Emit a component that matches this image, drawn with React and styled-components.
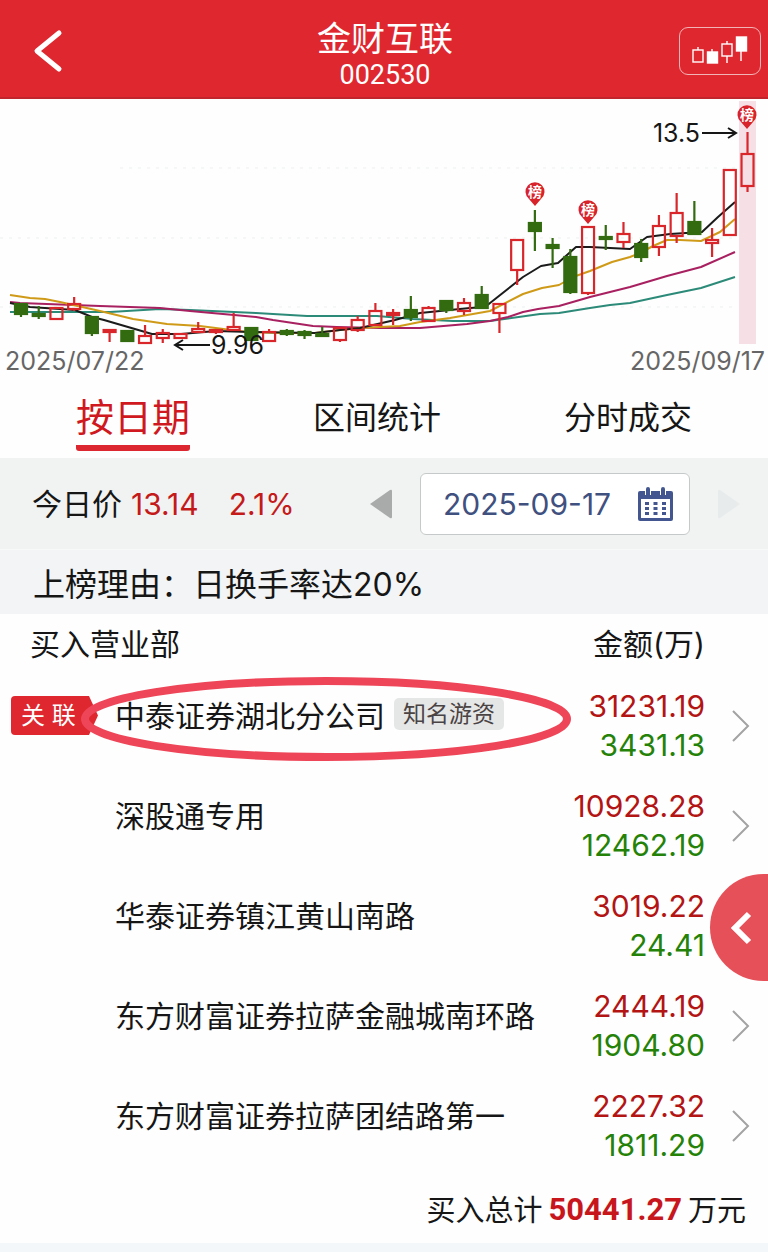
import React from "react";
import styled, { createGlobalStyle, css } from "styled-components";

const GlobalStyle = createGlobalStyle`
  * { box-sizing: border-box; }
  body {
    margin: 0;
    background: #f3f7f9;
    color: #161616;
    font-family: Inter, "Noto Sans CJK SC", sans-serif;
    font-size: 30px;
  }
  button, input { font: inherit; color: inherit; }
  button {
    margin: 0;
    padding: 0;
    border: 0;
    background: none;
    cursor: pointer;
  }
  svg { display: block; }
`;

const Page = styled.main`
  position: relative;
  overflow: hidden;
  background: #fefefe;
`;

const Header = styled.header`
  display: grid;
  grid-template-columns: 89px 1fr 89px;
  align-items: center;
  height: 99px;
  padding-top: 4px;
  background: #df272f;
  border-bottom: 2px solid #c0242c;
  color: #fff;
`;

const BackButton = styled.button`
  width: 64px;
  height: 64px;
  padding-left: 32px;
`;

const Heading = styled.div`
  padding: 8px 0 0 2px;
  text-align: center;
`;

const StockName = styled.h1`
  margin: 0;
  font-size: 34px;
  font-weight: 400;
  line-height: 40px;
`;

const StockCode = styled.div`
  font-family: Roboto, sans-serif;
  font-size: 27px;
  line-height: 32px;
`;

const KlineButton = styled.button`
  display: flex;
  justify-content: center;
  align-items: center;
  width: 82px;
  height: 48px;
  border: 1px solid #f3b4b7;
  border-radius: 9px;
`;

const Chart = styled.svg`
  width: 100%;
  height: auto;
`;

const Tabs = styled.nav`
  display: flex;
  justify-content: space-between;
  align-items: flex-start;
  height: 80px;
  padding: 0 76px;
`;

const Tab = styled.button`
  height: 73px;
  font-size: 32px;
  line-height: 80px;
  ${(p) =>
    p.$active &&
    css`
      border-bottom: 6px solid #dc2731;
      border-radius: 3px;
      color: #cf1820;
      font-size: 38px;
      line-height: 78px;
    `}
`;

const Bar = styled.section`
  display: flex;
  align-items: center;
  background: #f1f3f3;
`;

const PriceBar = styled(Bar)`
  height: 91px;
  padding: 0 28px 0 32px;
`;

const Quote = styled.div`
  display: flex;
  flex: 1;
  align-items: center;
  padding-bottom: 4px;
  white-space: nowrap;
`;

const Figure = styled.span`
  padding-top: 4px;
  margin-left: ${(p) => p.$gap}px;
  color: #c41a1a;
`;

const StepButton = styled.button`
  width: 22px;
  color: ${(p) => (p.$faint ? "#e8ebeb" : "#a9abab")};
`;

const DateField = styled.label`
  display: flex;
  align-items: center;
  justify-content: space-between;
  width: 270px;
  height: 62px;
  margin: 0 28px;
  padding: 0 16px 0 22px;
  background: #fff;
  border: 1px solid #c6c9ca;
  border-radius: 6px;
`;

const DateInput = styled.input`
  width: 180px;
  padding: 0;
  border: 0;
  outline: 0;
  background: none;
  color: #40507f;
`;

const ReasonBar = styled(Bar)`
  height: 65px;
  padding: 0 33px;
  background: #f2f4f5;
  border-top: 1px solid #f7f9f9;
  font-size: 32px;
`;

const ListHead = styled.div`
  display: flex;
  justify-content: space-between;
  align-items: center;
  height: 62px;
  padding: 0 63px 6px 30px;
`;

const List = styled.section`
  position: relative;
`;

const Row = styled.div`
  position: relative;
  display: grid;
  grid-template-columns: 115px 1fr auto 63px;
  height: 100px;
  padding: 11px 0;
`;

const RowName = styled.div`
  display: flex;
  align-items: center;
  height: 54px;
  white-space: nowrap;
`;

const Linked = styled.span`
  align-self: start;
  width: 87px;
  height: 39px;
  margin: 9px 0 0 11px;
  padding-left: 10px;
  background: #df272f;
  border-radius: 4px 0 0 4px;
  clip-path: polygon(0 0, 78px 0, 100% 50%, 78px 100%, 0 100%);
  color: #fff;
  font-size: 24px;
  line-height: 40px;
`;

const Tag = styled.span`
  margin-left: 9px;
  padding: 0 9px;
  background: #e5e6e6;
  border-radius: 5px;
  color: #4a4343;
  font-size: 23px;
  line-height: 32px;
`;

const Amounts = styled.div`
  text-align: right;
  line-height: 39px;
`;

const Amount = styled.div`
  color: ${(p) => (p.$sell ? "#258208" : "#b31414")};
`;

const MoreButton = styled.button`
  display: flex;
  justify-content: flex-end;
  align-items: center;
  padding-right: 18px;
`;

const Highlight = styled.svg`
  position: absolute;
  top: 0;
  left: 80px;
`;

const Drawer = styled.button`
  position: absolute;
  top: 198px;
  right: 0;
  width: 58px;
  height: 107px;
  padding-left: 20px;
  overflow: hidden;
  background: #e65059;
  border-radius: 54px 0 0 54px / 54px 0 0 54px;
`;

const Total = styled.footer`
  display: flex;
  justify-content: flex-end;
  align-items: center;
  height: 67px;
  padding: 0 22px 4px 0;
  font-size: 29px;
`;

const TotalSum = styled.strong`
  padding-top: 4px;
  margin: 0 6px;
  color: #c8161d;
  font-family: Roboto, sans-serif;
  font-size: 31px;
  font-weight: 700;
`;

// [high, body top, body bottom, low, rising]
const CANDLES = [
  [304, 304, 314, 317, 0], [306, 314, 316, 319, 0], [308, 308, 319, 319, 1],
  [297, 304, 309, 311, 1], [317, 317, 333, 336, 0], [330, 330, 332, 342, 1],
  [331, 331, 341, 342, 0], [325, 336, 343, 343, 1], [329, 333, 338, 343, 1],
  [333, 334, 338, 339, 1], [322, 329, 332, 333, 1], [330, 330, 332, 334, 1],
  [313, 327, 330, 330, 1], [328, 328, 340, 341, 0], [329, 332, 341, 341, 1],
  [329, 331, 334, 336, 0], [330, 332, 335, 339, 0], [327, 334, 336, 336, 0],
  [327, 328, 340, 342, 1], [316, 320, 330, 332, 1], [303, 311, 325, 325, 1],
  [309, 313, 315, 325, 1], [296, 310, 317, 321, 0], [306, 308, 321, 321, 1],
  [301, 301, 310, 313, 0], [298, 303, 311, 315, 1], [286, 295, 308, 308, 0],
  [304, 304, 313, 333, 1], [240, 240, 270, 285, 1], [210, 223, 231, 251, 0],
  [238, 245, 248, 268, 0], [249, 257, 292, 294, 0], [227, 227, 293, 295, 1],
  [225, 237, 239, 250, 0], [222, 234, 242, 248, 1], [239, 244, 257, 262, 0],
  [215, 226, 247, 256, 1], [193, 213, 236, 243, 1], [201, 222, 234, 234, 0],
  [228, 240, 243, 257, 1], [170, 170, 235, 235, 1], [132, 154, 186, 192, 1],
];

const AVERAGES = [
  ["#2c8a78", "10,312 60,312 110,312 160,309 190,310 256,313 307,316 377,316 413,319 453,321 490,321 540,314 559,313 590,308 610,305 630,303 667,295 701,288 735,277"],
  ["#a82060", "10,302 20,303 100,306 160,308 190,311 256,317 273,320 313,326 337,327 380,328 420,328 467,324 490,321 508,317 523,312 538,309 559,306 590,297 630,287 667,276 701,267 735,252"],
  ["#cf9a17", "10,295 30,298 45,299 60,302 100,311 133,319 167,324 200,326 247,332 285,333 315,333 340,330 360,328 400,326 420,322 450,318 473,314 490,311 523,294 542,288 559,285 573,277 590,271 612,262 630,257 640,253 653,246 667,240 680,240 701,241 720,232 735,219"],
  ["#1b1b1b", "10,303 30,307 75,310 92,317 104,320 152,334 181,334 216,331 252,332 315,333 340,330 360,328 395,320 420,313 440,311 470,308 485,307 523,277 541,266 558,263 576,247 590,247 630,249 647,237 670,234 702,232 718,217 735,202"],
];

function Candle({ index, data }) {
  const [high, top, bottom, low, rising] = data;
  const x = 21 + index * 17.72;
  const color = rising ? "#d8262a" : "#336b10";
  return (
    <g stroke={color} strokeWidth="2.2" fill={rising ? "none" : color}>
      <path d={`M${x} ${high}V${top}M${x} ${bottom}V${low}`} />
      <rect x={x - 6} y={top} width="12" height={bottom - top} />
    </g>
  );
}

function Pin({ x, y }) {
  return (
    <g>
      <path
        d={`M${x} ${y + 14}L${x - 6} ${y + 7}A9.5 9.5 0 1 1 ${x + 6} ${y + 7}Z`}
        fill="#d9232b"
      />
      <text x={x} y={y + 5} fill="#fff" fontSize="14" fontWeight="700" textAnchor="middle">
        榜
      </text>
    </g>
  );
}

function KlineChart() {
  return (
    <Chart viewBox="0 99 768 279" role="img" aria-label="K线图">
      <g stroke="#edf0ef" strokeDasharray="3 6">
        <path d="M120 168H735M0 238H735M0 307H735" />
      </g>
      <rect x="739" y="101" width="17" height="243" fill="#f7dfe6" />
      {AVERAGES.map(([color, points]) => (
        <polyline key={color} points={points} fill="none" stroke={color} strokeWidth="2" strokeLinejoin="round" />
      ))}
      {CANDLES.map((data, i) => (
        <Candle key={i} index={i} data={data} />
      ))}
      <Pin x={535} y={192} />
      <Pin x={588} y={210} />
      <Pin x={747} y={115} />
      <g stroke="#161616" strokeWidth="2" fill="none">
        <path d="M702 133H736M728 128L736 133L728 138" />
        <path d="M210 345H175M183 340L175 345L183 350" />
      </g>
      <g fill="#161616" fontSize="25">
        <text x="700" y="142" textAnchor="end">13.5</text>
        <text x="211" y="354">9.96</text>
      </g>
      <g fill="#666" fontSize="25">
        <text x="5" y="370">2025/07/22</text>
        <text x="765" y="370" textAnchor="end">2025/09/17</text>
      </g>
    </Chart>
  );
}

function CalendarIcon() {
  return (
    <svg width="35" height="34" viewBox="0 0 35 34" aria-hidden="true">
      <rect x="0" y="4" width="35" height="30" rx="2" fill="#43568f" />
      <rect x="3" y="12" width="29" height="19" fill="#fff" />
      <path d="M10 1V8M25 1V8" stroke="#fff" strokeWidth="6" />
      <path d="M10 2V8M25 2V8" stroke="#43568f" strokeWidth="4" strokeLinecap="round" />
      <path d="M9 15V29M17.500 15V29M26 15V29" stroke="#43568f" strokeWidth="4" strokeDasharray="3 2" />
    </svg>
  );
}

const SEATS = [
  { name: "中泰证券湖北分公司", buy: "31231.19", sell: "3431.13", tag: "知名游资", linked: true },
  { name: "深股通专用", buy: "10928.28", sell: "12462.19" },
  { name: "华泰证券镇江黄山南路", buy: "3019.22", sell: "24.41" },
  { name: "东方财富证券拉萨金融城南环路", buy: "2444.19", sell: "1904.80" },
  { name: "东方财富证券拉萨团结路第一", buy: "2227.32", sell: "1811.29" },
];

function SeatRow({ seat }) {
  return (
    <Row>
      {seat.linked ? <Linked>关 联</Linked> : <span />}
      <RowName>
        {seat.name}
        {seat.tag && <Tag>{seat.tag}</Tag>}
      </RowName>
      <Amounts>
        <Amount>{seat.buy}</Amount>
        <Amount $sell>{seat.sell}</Amount>
      </Amounts>
      <MoreButton aria-label={seat.name}>
        <svg width="18" height="32" viewBox="0 0 18 32" fill="none" stroke="#a3a3a3" strokeWidth="2">
          <path d="M1 1L16 16L1 31" />
        </svg>
      </MoreButton>
      {seat.linked && (
        <Highlight width="492" height="86" viewBox="0 0 492 86" aria-hidden="true">
          <ellipse cx="246" cy="43" rx="241" ry="38" fill="none" stroke="#ee4658" strokeWidth="8" />
        </Highlight>
      )}
    </Row>
  );
}

export default function App() {
  return (
    <>
      <GlobalStyle />
      <Page>
        <Header>
          <BackButton aria-label="返回">
            <svg width="32" height="44" viewBox="0 0 32 44" fill="none" stroke="#fff" strokeWidth="5" strokeLinecap="round" strokeLinejoin="round">
              <path d="M27 4L5 22L27 40" />
            </svg>
          </BackButton>
          <Heading>
            <StockName>金财互联</StockName>
            <StockCode>002530</StockCode>
          </Heading>
          <KlineButton aria-label="K线">
            <svg width="56" height="30" viewBox="0 0 56 30" fill="none" stroke="#fff" strokeWidth="1.4">
              <path d="M6 11V14M20 13V16M35 5V8M35 20V27M49 15V25" />
              <rect x="1" y="14" width="10" height="12" />
              <rect x="15.500" y="16" width="10" height="11" fill="#fff" />
              <rect x="30" y="8" width="10" height="12" />
              <rect x="44.500" y="1" width="10" height="14" fill="#fff" />
            </svg>
          </KlineButton>
        </Header>
        <KlineChart />
        <Tabs>
          <Tab $active>按日期</Tab>
          <Tab>区间统计</Tab>
          <Tab>分时成交</Tab>
        </Tabs>
        <PriceBar>
          <Quote>
            今日价
            <Figure $gap={9}>13.14</Figure>
            <Figure $gap={30}>2.1%</Figure>
          </Quote>
          <StepButton aria-label="前一日">
            <svg width="22" height="30" viewBox="0 0 22 30" fill="currentColor">
              <path d="M0 15L20 1Q22 0 22 2V28Q22 30 20 29Z" />
            </svg>
          </StepButton>
          <DateField>
            <DateInput aria-label="日期" defaultValue="2025-09-17" />
            <CalendarIcon />
          </DateField>
          <StepButton $faint aria-label="后一日">
            <svg width="22" height="30" viewBox="0 0 22 30" fill="currentColor">
              <path d="M22 15L2 1Q0 0 0 2V28Q0 30 2 29Z" />
            </svg>
          </StepButton>
        </PriceBar>
        <ReasonBar>上榜理由：日换手率达20%</ReasonBar>
        <ListHead>
          <span>买入营业部</span>
          <span>金额(万)</span>
        </ListHead>
        <List>
          {SEATS.map((seat) => (
            <SeatRow key={seat.name} seat={seat} />
          ))}
          <Drawer aria-label="展开">
            <svg width="22" height="34" viewBox="0 0 22 34" fill="none" stroke="#fff" strokeWidth="6">
              <path d="M19 3L5 17L19 31" />
            </svg>
          </Drawer>
        </List>
        <Total>
          买入总计<TotalSum>50441.27</TotalSum>万元
        </Total>
      </Page>
    </>
  );
}
